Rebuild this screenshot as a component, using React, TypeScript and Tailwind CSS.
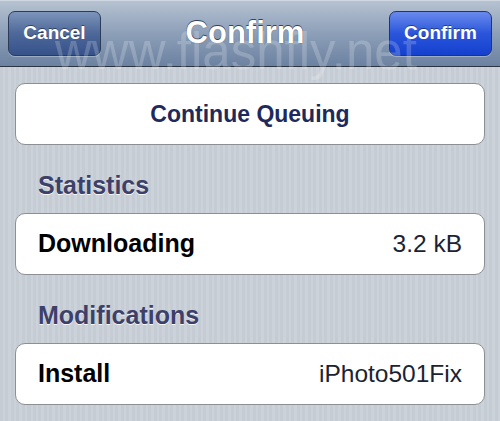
const font = "font-[family-name:'Liberation_Sans',Arial,sans-serif]"

const NavButton = ({ label, tone }: { label: string; tone: "cancel" | "confirm" }) => {
    const skin =
        tone === "cancel"
            ? "bg-gradient-to-b from-[#7d95bb] via-[#4d6899] to-[#36528a] border-[#2b3b58]"
            : "bg-gradient-to-b from-[#6a89ec] via-[#2a55db] to-[#1440cf] border-[#21356e]"
    return (
        <div className={`${skin} h-[45px] rounded-[7px] border flex items-center justify-center text-white font-bold text-[19px] [text-shadow:0_-1px_0_rgba(0,0,0,0.45)] shadow-[0_1px_0_rgba(255,255,255,0.3)]`}>
            {label}
        </div>
    )
}

const Row = ({ label, value }: { label: string; value: string }) => (
    <div className="h-[62px] bg-white rounded-[10px] border border-[#8c8f94] flex items-center justify-between px-[22px]">
        <span className="font-bold text-[25px] text-black">{label}</span>
        <span className="text-[24.5px] text-[#1b2333]">{value}</span>
    </div>
)

const Header = ({ title }: { title: string }) => (
    <div className="h-[68px] flex items-end pb-[15px] pl-[23px]">
        <span className="font-bold text-[25px] leading-[26px] text-[#3d4068] [text-shadow:0_1px_0_rgba(255,255,255,0.85)]">{title}</span>
    </div>
)

export default function App() {
    return (
        <div className={`${font} relative w-[500px] h-[421px] overflow-hidden bg-[repeating-linear-gradient(90deg,#c5ccd4_0px,#c5ccd4_3px,#cbd2d9_3px,#cbd2d9_5.5px)]`}>
            <div className="h-[67px] bg-gradient-to-b from-[#b6c2d1] via-[#8d9fb8] to-[#6c82a1] border-b border-[#2c3441] border-t border-t-[#cfd7e2] flex items-center justify-between px-[8px]">
                <div className="w-[93px]">
                    <NavButton label="Cancel" tone="cancel" />
                </div>
                <div className="text-white font-bold text-[31px] [text-shadow:0_-1px_0_rgba(40,52,75,0.9),0_0_1px_rgba(40,52,75,0.8)]">Confirm</div>
                <div className="w-[103px]">
                    <NavButton label="Confirm" tone="confirm" />
                </div>
            </div>

            <div className="px-[15px] pt-[16px]">
                <div className="h-[62px] bg-white rounded-[10px] border border-[#8c8f94] flex items-center justify-center">
                    <span className="font-bold text-[23px] text-[#1e2a5c]">Continue Queuing</span>
                </div>
                <Header title="Statistics" />
                <Row label="Downloading" value="3.2 kB" />
                <Header title="Modifications" />
                <Row label="Install" value="iPhoto501Fix" />
            </div>

            {/* watermark */}
            <div className="absolute left-[55px] top-[22px] pointer-events-none text-[51px] leading-[60px] text-white/20">
                www.flashfly.net
            </div>
        </div>
    )
}
